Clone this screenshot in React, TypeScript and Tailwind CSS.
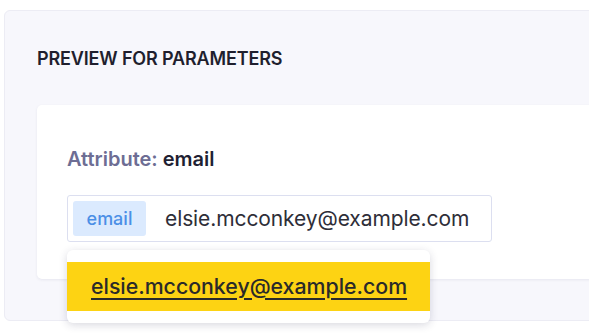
import React from "react";

export default function App() {
  return (
    <div className="w-[597px] h-[334px] bg-white overflow-hidden" style={{ fontFamily: "Inter, 'Noto Sans', sans-serif" }}>
      <div className="pt-[10px] pl-[4px] w-[589px] overflow-x-clip">
        <div className="w-[640px] h-[311px] rounded-[6px] bg-[#f7f7fc] border border-[#ececf4] pl-[32px] pt-[36px] flex flex-col">
          <h2 className="text-[18px] leading-[24px] font-semibold text-[#1f1f2e] tracking-[-0.15px]">PREVIEW FOR PARAMETERS</h2>
          <div className="mt-[34px] relative h-[174px] rounded-[5px] bg-white shadow-[0_1px_3px_rgba(40,40,90,0.08)] pl-[30px] pt-[41px]">
            <div className="text-[20px] leading-[26px] font-semibold">
              <span className="text-[#6d6d94]">Attribute:</span> <span className="text-[#1f1f33]">email</span>
            </div>
            <div className="mt-[23px] w-[425px] h-[47px] border border-[#dcdff0] rounded-[3px] bg-white flex items-center pl-[5px]">
              <span className="w-[73px] h-[35px] rounded-[3px] bg-[#dbeafe] text-[#4b8fe6] text-[18px] font-medium flex items-center justify-center">email</span>
              <span className="ml-[19px] text-[21px] text-[#2e2e38] tracking-[-0.1px]">elsie.mcconkey@example.com</span>
            </div>
            <div className="absolute left-[30px] top-[145px] w-[363px] h-[73px] bg-white rounded-[6px] shadow-[0_2px_8px_rgba(40,40,80,0.18)] pt-[12px] z-10">
              <div className="h-[49px] bg-[#fdd313] flex items-center pl-[24px]">
                <span className="text-[21.3px] font-medium text-[#2a2a2a] underline underline-offset-[4px]">elsie.mcconkey@example.com</span>
              </div>
            </div>
          </div>
        </div>
      </div>
    </div>
  );
}
